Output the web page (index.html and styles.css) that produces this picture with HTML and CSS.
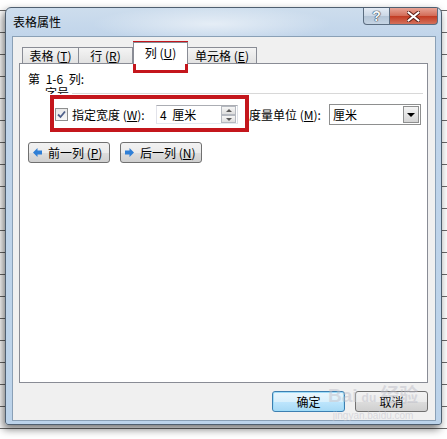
FILE: index.html
```html
<!DOCTYPE html>
<html>
  <head>
    <meta charset="utf-8">
    <title>表格属性</title>
    <link rel="stylesheet" href="styles.css">
  </head>
  <body>
    <!-- 对话框 -->
    <div class="window">
      <!-- 标题栏 -->
      <div class="titlebar">
        <span class="title">表格属性</span>
        <div class="caption-btns">
          <span class="cap-help">?</span>
          <span class="cap-close">
            <svg width="13" height="11" viewBox="0 0 13 11">
              <path d="M1.5 1.5 L11.5 9.5 M11.5 1.5 L1.5 9.5" stroke="#5a1d14" stroke-width="4" stroke-linecap="round"/>
              <path d="M1.5 1.5 L11.5 9.5 M11.5 1.5 L1.5 9.5" stroke="#fff" stroke-width="2.2" stroke-linecap="round"/>
            </svg>
          </span>
        </div>
      </div>
      <!-- 客户区 -->
      <div class="client">
        <div class="tabs">
          <span class="tab tab-table">表格 (<u>T</u>)</span>
          <span class="tab tab-row">行 (<u>R</u>)</span>
          <span class="tab tab-active">列 (<u>U</u>)</span>
          <span class="tab tab-cell">单元格 (<u>E</u>)</span>
        </div>
        <div class="panel">
          <div class="col-range">第 1-6 列:</div>
          <div class="group-head">
            <span class="group-label">字号</span>
            <span class="group-line"></span>
          </div>
          <div class="width-row">
            <span class="checkbox">
              <svg width="9" height="9" viewBox="0 0 9 9">
                <path d="M1 4.5 L3.5 7 L8 1.5" fill="none" stroke="#4d5f8a" stroke-width="1.8"/>
              </svg>
            </span>
            <span class="label label-width">指定宽度 (<u>W</u>):</span>
            <span class="spin">
              <span class="spin-text">4 厘米</span>
              <span class="spin-btns">
                <span class="spin-up"></span>
                <span class="spin-down"></span>
              </span>
            </span>
            <span class="label label-unit">度量单位 (<u>M</u>):</span>
            <span class="select">
              <span class="select-text">厘米</span>
              <span class="select-btn"></span>
            </span>
          </div>
          <div class="nav-row">
            <span class="btn btn-nav">
              <svg width="9" height="9" viewBox="0 0 9 9">
                <polygon points="0,4.5 4.5,0 4.5,2.5 9,2.5 9,6.5 4.5,6.5 4.5,9" fill="#2f7fd6"/>
              </svg>
              <span>前一列 (<u>P</u>)</span>
            </span>
            <span class="btn btn-nav">
              <svg width="9" height="9" viewBox="0 0 9 9">
                <polygon points="9,4.5 4.5,0 4.5,2.5 0,2.5 0,6.5 4.5,6.5 4.5,9" fill="#2f7fd6"/>
              </svg>
              <span>后一列 (<u>N</u>)</span>
            </span>
          </div>
        </div>
        <div class="footer-btns">
          <span class="btn btn-ok">确定</span>
          <span class="btn btn-cancel">取消</span>
        </div>
      </div>
      <!-- 标注 -->
      <div class="mark mark-tab"></div>
      <div class="mark mark-width"></div>
      <!-- 水印 -->
      <div class="watermark">
        <span class="wm-logo">Bai<span class="wm-du">du</span>经验</span>
        <span class="wm-url">jingyan.baidu.com</span>
      </div>
    </div>
  </body>
</html>
```

FILE: styles.css
```css
/* 重置 */

body {
  margin: 0;
  width: 447px;
  height: 439px;
  overflow: hidden;
  font-family: "Noto Sans CJK SC", "Liberation Sans", sans-serif;
  font-size: 12px;
  color: #000;
  background-color: #fff;
  background-image: repeating-linear-gradient(to bottom, transparent 0, transparent 10px, #6a6a6a 10px, #6a6a6a 11px, transparent 11px, transparent 22px);
}
u {
  text-decoration: underline;
  text-underline-offset: 1px;
}

/* 窗口 */

.window {
  position: relative;
  box-sizing: border-box;
  margin: 7px 0 0 5px;
  width: 437px;
  height: 418px;
  padding: 0 5px 0 6px;
  border: 1px solid #4f5f70;
  border-radius: 6px 6px 3px 3px;
  background: linear-gradient(to bottom, #cddded 0, #c0d4ea 30px, #bcd3ea 100%);
  box-shadow: -2px 4px 9px rgba(0,0,0,0.55);
}

/* 标题栏 */

.titlebar {
  display: flex;
  justify-content: space-between;
  height: 28px;
  background: radial-gradient(ellipse 120px 18px at 200px 16px, rgba(255,255,255,0.55), rgba(255,255,255,0));
}
.title {
  padding-left: 1px;
  line-height: 28px;
}
.caption-btns {
  display: flex;
  margin-right: -2px;
  height: 17px;
}
.cap-help, .cap-close {
  display: flex;
  align-items: center;
  justify-content: center;
  box-sizing: border-box;
  height: 17px;
  border: 1px solid #5b6d80;
  border-top: 0;
}
.cap-help {
  width: 27px;
  border-radius: 0 0 0 4px;
  background: linear-gradient(to bottom, #e4ecf5 0, #cbd8e6 50%, #b3c4d6 51%, #c6d5e4 100%);
  color: #f4f7fa;
  font-family: "Liberation Sans", sans-serif;
  font-weight: bold;
  font-size: 14px;
  text-shadow: 0 0 1px #2d3c4c, 0 0 1px #2d3c4c, 0 0 1px #2d3c4c;
}
.cap-close {
  width: 48px;
  border-left: 0;
  border-radius: 0 0 4px 0;
  background: linear-gradient(to bottom, #e8a496 0, #d26a55 50%, #c23a21 51%, #d4715c 100%);
}

/* 客户区 */

.client {
  box-sizing: border-box;
  height: 385px;
  padding: 5px 7px 0 6px;
  border: 1px solid #8aa0b6;
  background-color: #f0f0f0;
}

/* 选项卡 */

.tabs {
  position: relative;
  z-index: 1;
  display: flex;
  align-items: flex-end;
  height: 22px;
  margin-bottom: -1px;
  padding-left: 3px;
}
.tab {
  box-sizing: border-box;
  height: 16px;
  margin-bottom: 1px;
  border: 1px solid #898c95;
  border-bottom: 0;
  background: linear-gradient(to bottom, #f4f4f4, #e2e2e2);
  line-height: 15px;
  text-align: center;
  white-space: nowrap;
}
.tab-table {
  width: 57px;
}
.tab-row {
  width: 54px;
  border-left: 0;
}
.tab-active {
  width: 55px;
  height: 22px;
  margin-bottom: 0;
  background: #fff;
  line-height: 19px;
  border-left: 1px solid #898c95;
}
.tab-cell {
  width: 69px;
  border-left: 0;
}

/* 面板 */

.panel {
  box-sizing: border-box;
  width: 409px;
  height: 320px;
  padding-top: 8px;
  border: 1px solid #898c95;
  background: #fff;
}
.col-range {
  padding-left: 8px;
  line-height: 14px;
  word-spacing: 3px;
}
.group-head {
  display: flex;
  align-items: flex-end;
  height: 8px;
  overflow: hidden;
  padding-left: 25px;
}
.group-label {
  align-self: flex-start;
  line-height: 14px;
}
.group-line {
  flex: 1;
  height: 1px;
  margin: 0 4px 0 3px;
  background: #d8d8d8;
}

/* 宽度行 */

.width-row {
  display: flex;
  align-items: center;
  height: 21px;
  margin-top: 10px;
  padding-left: 35px;
}
.checkbox {
  display: flex;
  align-items: center;
  justify-content: center;
  box-sizing: border-box;
  width: 13px;
  height: 13px;
  border: 1px solid #8e8f8f;
  background: linear-gradient(to bottom, #e8e8e8, #f8f8f8);
}
.label {
  line-height: 14px;
  white-space: nowrap;
}
.label-width {
  width: 84px;
  margin-left: 4px;
}
.label-unit {
  width: 80px;
  margin-left: 11px;
}
.spin {
  display: flex;
  align-items: center;
  box-sizing: border-box;
  width: 82px;
  height: 19px;
  border: 1px solid #abadb3;
  border-color: #abadb3 #dbdfe6 #e3e9ef #e2e3ea;
  background: #fff;
}
.spin-text {
  flex: 1;
  padding-left: 3px;
  word-spacing: 3px;
}
.spin-btns {
  display: flex;
  flex-direction: column;
  width: 15px;
  height: 17px;
  margin-right: 1px;
}
.spin-up, .spin-down {
  flex: 1;
  box-sizing: border-box;
  border: 1px solid #b5b9c0;
  background: linear-gradient(to bottom, #f6f6f6, #dedede);
  position: relative;
}
.spin-up::after, .spin-down::after {
  content: "";
  position: absolute;
  left: 4px;
  top: 2px;
  border-left: 3px solid transparent;
  border-right: 3px solid transparent;
}
.spin-up::after {
  border-bottom: 3px solid #5a5a5a;
}
.spin-down::after {
  border-top: 3px solid #5a5a5a;
}
.select {
  display: flex;
  align-items: center;
  box-sizing: border-box;
  width: 92px;
  height: 21px;
  border: 1px solid #8e8f8f;
  background: #fff;
}
.select-text {
  flex: 1;
  padding-left: 3px;
}
.select-btn {
  display: flex;
  align-items: center;
  justify-content: center;
  box-sizing: border-box;
  width: 16px;
  height: 17px;
  margin-right: 1px;
  border: 1px solid #8e8f8f;
  background: linear-gradient(to bottom, #f4f4f4, #d4d4d4);
}
.select-btn::after {
  content: "";
  border-left: 4px solid transparent;
  border-right: 4px solid transparent;
  border-top: 4px solid #000;
}

/* 按钮 */

.btn {
  display: flex;
  align-items: center;
  box-sizing: border-box;
  height: 21px;
  border: 1px solid #707070;
  border-radius: 3px;
  background: linear-gradient(to bottom, #f2f2f2 0, #ebebeb 50%, #dddddd 51%, #cfcfcf 100%);
  white-space: nowrap;
}
.nav-row {
  display: flex;
  gap: 10px;
  margin-top: 17px;
  padding-left: 8px;
}
.btn-nav {
  width: 82px;
  padding-left: 4px;
  gap: 6px;
}
.footer-btns {
  display: flex;
  justify-content: flex-end;
  gap: 10px;
  margin-top: 8px;
}
.btn-ok, .btn-cancel {
  justify-content: center;
  width: 73px;
}
.btn-ok {
  border-color: #3c7fb1;
  box-shadow: inset 0 0 0 1px #9fdcf8;
  background: linear-gradient(to bottom, #eaf6fd 0, #d9f0fc 50%, #bee6fd 51%, #a7d9f5 100%);
}

/* 标注 */

.mark {
  position: absolute;
  box-sizing: border-box;
  border: 3px solid #c4161c;
}
.mark-tab {
  left: 127px;
  top: 33px;
  width: 55px;
  height: 32px;
}
.mark-width {
  left: 44px;
  top: 87px;
  width: 199px;
  height: 37px;
  border-width: 4px;
}

/* 水印 */

.watermark {
  position: absolute;
  left: 322px;
  top: 377px;
  display: flex;
  flex-direction: column;
  align-items: center;
  color: rgba(190,190,200,0.5);
  pointer-events: none;
}
.wm-logo {
  font-family: "Liberation Sans", "Noto Sans CJK SC", sans-serif;
  font-size: 19px;
  font-weight: bold;
  line-height: 22px;
}
.wm-du {
  font-size: 12px;
  margin: 0 4px;
}
.wm-url {
  font-family: "Liberation Sans", sans-serif;
  font-size: 10px;
  line-height: 14px;
}
```
